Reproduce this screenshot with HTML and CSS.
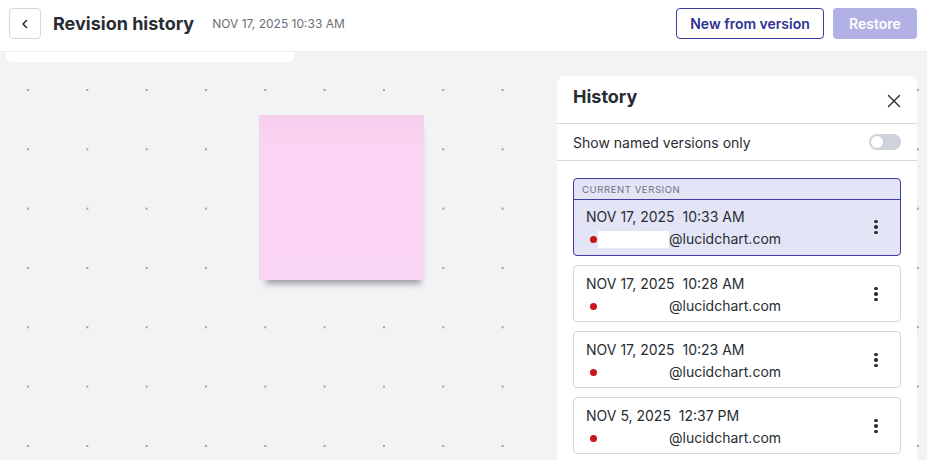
FILE: index.html
```html
<!DOCTYPE html>
<html lang="en">
<head>
<meta charset="utf-8">
<title>Revision history</title>
<link rel="stylesheet" href="styles.css">
</head>
<body>
<div class="app">
  <header class="topbar">
    <button class="back-btn" aria-label="Back">
      <svg width="12" height="12" viewBox="0 0 12 12"><path d="M7.5 2.5 L4 6 L7.5 9.5" fill="none" stroke="#282c33" stroke-width="1.5" stroke-linecap="round" stroke-linejoin="round"/></svg>
    </button>
    <h1 class="title">Revision history</h1>
    <span class="title-date">NOV 17, 2025 10:33 AM</span>
    <div class="spacer"></div>
    <button class="btn btn-outline">New from version</button>
    <button class="btn btn-disabled">Restore</button>
  </header>
  <main class="workspace">
    <div class="canvas">
      <div class="toolbar-stub"></div>
      <div class="sticky"></div>
    </div>
    <aside class="panel">
      <div class="panel-head">
        <h2 class="panel-title">History</h2>
        <svg class="close" width="14" height="14" viewBox="0 0 14 14"><path d="M1.5 1.5 L12.5 12.5 M12.5 1.5 L1.5 12.5" stroke="#282c33" stroke-width="1.4" stroke-linecap="round"/></svg>
      </div>
      <div class="toggle-row">
        <span>Show named versions only</span>
        <span class="toggle"><span class="knob"></span></span>
      </div>
      <div class="list">
        <div class="card current">
          <div class="card-label">CURRENT VERSION</div>
          <div class="card-body">
            <div class="card-text">
              <div class="date">NOV 17, 2025&nbsp; 10:33 AM</div>
              <div class="user"><span class="dot"></span><span class="name redact"></span>@lucidchart.com</div>
            </div>
            <span class="kebab"><i></i><i></i><i></i></span>
          </div>
        </div>
        <div class="card">
          <div class="card-body">
            <div class="card-text">
              <div class="date">NOV 17, 2025&nbsp; 10:28 AM</div>
              <div class="user"><span class="dot"></span><span class="name"></span>@lucidchart.com</div>
            </div>
            <span class="kebab"><i></i><i></i><i></i></span>
          </div>
        </div>
        <div class="card">
          <div class="card-body">
            <div class="card-text">
              <div class="date">NOV 17, 2025&nbsp; 10:23 AM</div>
              <div class="user"><span class="dot"></span><span class="name"></span>@lucidchart.com</div>
            </div>
            <span class="kebab"><i></i><i></i><i></i></span>
          </div>
        </div>
        <div class="card">
          <div class="card-body">
            <div class="card-text">
              <div class="date">NOV 5, 2025&nbsp; 12:37 PM</div>
              <div class="user"><span class="dot"></span><span class="name"></span>@lucidchart.com</div>
            </div>
            <span class="kebab"><i></i><i></i><i></i></span>
          </div>
        </div>
      </div>
    </aside>
  </main>
</div>
</body>
</html>
```

FILE: styles.css
```css
* { box-sizing: border-box; }
html, body { margin: 0; padding: 0; }
body {
  width: 927px;
  height: 460px;
  overflow: hidden;
  font-family: Inter, "Liberation Sans", sans-serif;
  color: #282c33;
  background: #f2f3f5;
}
.app { display: flex; flex-direction: column; height: 460px; }

.topbar {
  height: 52px;
  flex: none;
  background: #fff;
  display: flex;
  align-items: flex-start;
  padding: 8px 10px 0 9px;
  border-bottom: 1px solid #ebecef;
}
.back-btn {
  width: 32px;
  height: 31px;
  border: 1px solid #d5d7dc;
  border-radius: 4px;
  background: #fff;
  display: flex;
  align-items: center;
  justify-content: center;
  padding: 0;
}
.title {
  margin: 0 0 0 12px;
  font-size: 18px;
  line-height: 31px;
  font-weight: 700;
  color: #282c33;
}
.title-date {
  margin-left: 18px;
  font-size: 12px;
  line-height: 31px;
  color: #6b6e78;
}
.spacer { flex: 1; }
.btn {
  height: 31px;
  border-radius: 4px;
  font-family: inherit;
  font-size: 14px;
  font-weight: 600;
  padding: 0;
}
.btn-outline {
  width: 148px;
  background: #fff;
  border: 1px solid #3a3d9c;
  color: #2e3192;
}
.btn-disabled {
  width: 84px;
  margin-left: 9px;
  background: #b1b1e6;
  border: none;
  color: #fff;
}

.workspace {
  flex: 1;
  display: flex;
  background-color: #f2f3f5;
  background-image: radial-gradient(circle, #9ea1aa 0.9px, transparent 1.3px);
  background-size: 59.33px 59.33px;
  background-position: -1.7px 8.3px;
  overflow: hidden;
}
.canvas { flex: 1; position: relative; }
.toolbar-stub {
  margin-left: 6px;
  width: 288px;
  height: 10px;
  background: #fff;
  border-radius: 0 0 6px 6px;
}
.sticky {
  position: absolute;
  left: 259px;
  top: 63px;
  width: 165px;
  height: 165px;
  background: linear-gradient(#f8cfee, #fad4f2 20%, #fad4f3);
  box-shadow: 2px 9px 6px -5px rgba(60, 60, 70, 0.45);
}

.panel {
  width: 360px;
  margin: 24px 10px 0 0;
  background: #fff;
  border-radius: 8px 8px 0 0;
  display: flex;
  flex-direction: column;
}
.panel-head {
  height: 48px;
  display: flex;
  align-items: center;
  justify-content: space-between;
  padding: 0 16px;
  border-bottom: 1px solid #d6d8de;
}
.panel-title {
  margin: 0 0 6px;
  font-size: 18px;
  font-weight: 700;
}
.close { margin-top: 2px; }
.toggle-row {
  height: 37px;
  display: flex;
  align-items: center;
  justify-content: space-between;
  padding: 0 16px;
  font-size: 14px;
  border-bottom: 1px solid #d6d8de;
}
.toggle {
  width: 32px;
  height: 16px;
  border-radius: 8px;
  background: #cfd2db;
  display: flex;
  align-items: center;
  padding: 0 2px;
}
.knob {
  width: 12px;
  height: 12px;
  border-radius: 50%;
  background: #fff;
}

.list {
  padding: 17px 16px 0;
  display: flex;
  flex-direction: column;
  gap: 9px;
}
.card {
  border: 1px solid #d3d6dc;
  border-radius: 4px;
  background: #fff;
}
.card.current {
  border-color: #3c3f9c;
  background: #e3e4f5;
}
.card-label {
  height: 21px;
  border-bottom: 1px solid #3c3f9c;
  font-size: 9.5px;
  letter-spacing: 0.6px;
  color: #6d7080;
  padding: 5px 0 0 8px;
}
.card-body {
  display: flex;
  align-items: center;
  justify-content: space-between;
  padding: 7px 22px 4px 12px;
}
.current .card-body { padding: 6px 22px 5px 12px; }
.card-text { font-size: 14px; line-height: 22px; }
.date { color: #282c33; }
.user { display: flex; align-items: center; }
.dot {
  width: 7px;
  height: 7px;
  border-radius: 50%;
  background: #c8141c;
  margin: 0 1px 0 4px;
}
.name { width: 71px; height: 17px; }
.name.redact { background: #fff; }
.kebab {
  display: flex;
  flex-direction: column;
  gap: 2px;
  margin-top: -2px;
}
.kebab i {
  display: block;
  width: 3.6px;
  height: 3.6px;
  border-radius: 50%;
  background: #2a2d34;
}
```
